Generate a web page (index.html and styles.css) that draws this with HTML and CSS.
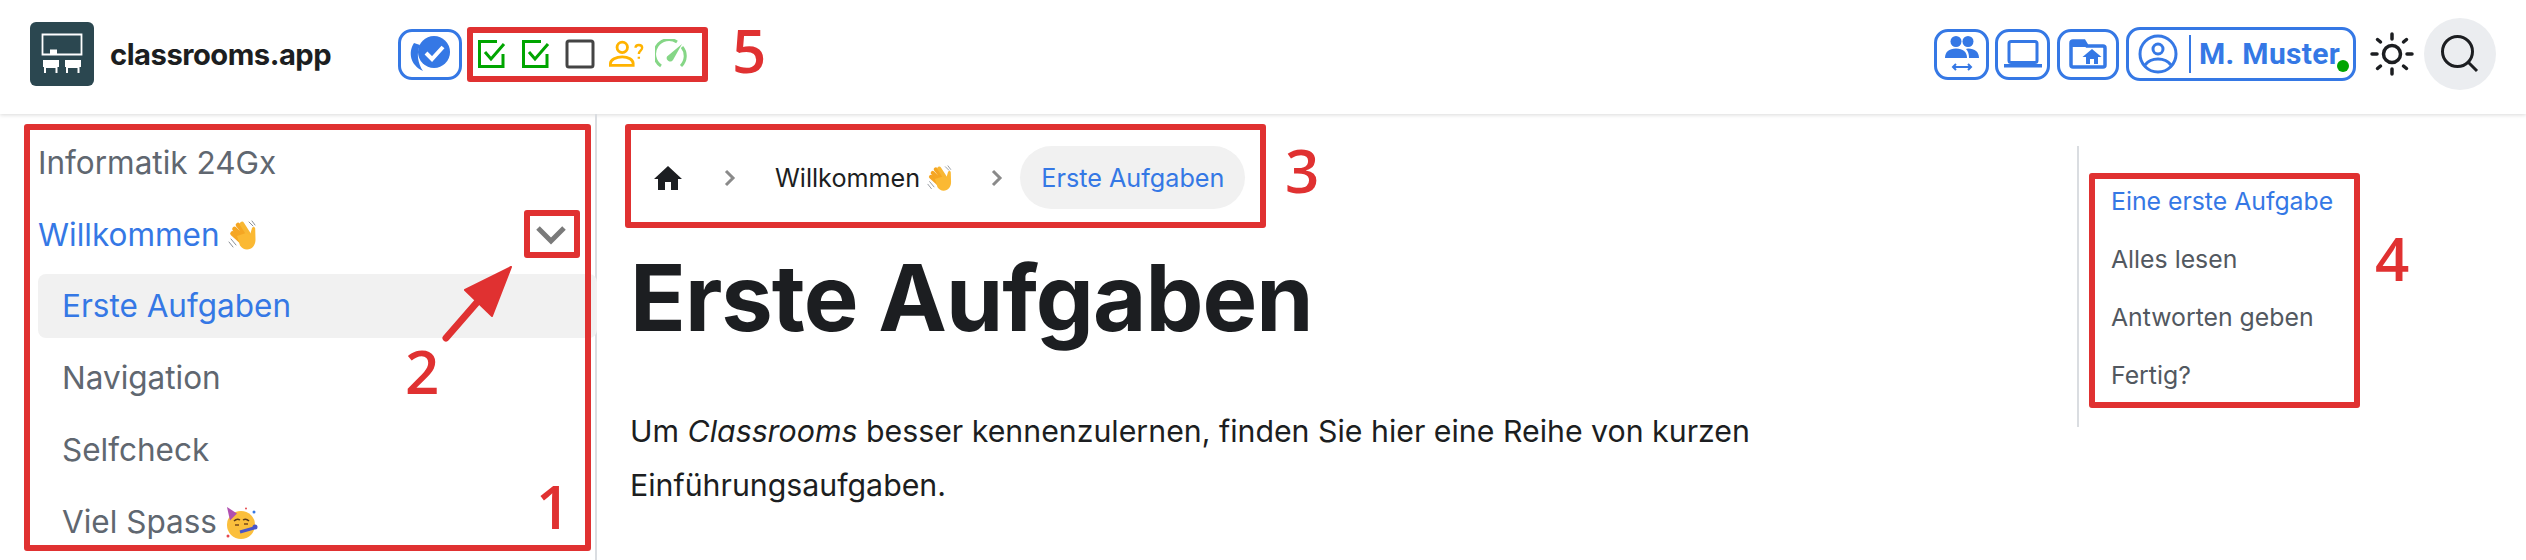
FILE: index.html
```html
<!DOCTYPE html>
<html lang="de">
  <head>
    <meta charset="UTF-8" />
    <meta name="viewport" content="width=device-width, initial-scale=1.0" />
    <title>Erste Aufgaben | classrooms.app</title>
    <link rel="stylesheet" href="styles.css">
  </head>
  <body>
    <svg class="defs" width="0" height="0">
      <symbol id="wave" viewBox="0 0 32 32">
        <g fill="none" stroke-linecap="round">
          <path d="M3 19l5 6M1 22l4 5" stroke="#8a8f96" stroke-width="1"/>
          <path d="M21 2l4 4M24 1l3 4" stroke="#8a8f96" stroke-width="1"/>
          <path d="M10 5l9 11M6.500 9l10 10M4.500 13.500l10 9" stroke="#f5a623" stroke-width="4.600"/>
          <path d="M14 4l7 11" stroke="#f8b733" stroke-width="4.600"/>
        </g>
        <path d="M9 16l9-3 4 2 2-7c.5-1.500 3-1.500 3.200.5l.3 11c0 6-3.500 10-8.500 10-3 0-5-1.500-7-4z" fill="#fbb933"/>
      </symbol>
    </svg>

    <nav class="navbar">
      <a class="brand">
        <svg class="logo" viewBox="0 0 64 64">
          <rect width="64" height="64" rx="6" fill="#2b4750"/>
          <path d="M12.500 12.500h39v20h-39z" fill="none" stroke="#fff" stroke-width="1.800"/>
          <rect x="20" y="27.500" width="7" height="5" fill="#fff"/>
          <path d="M13 38h16v7h-1.500v6h-2v-5h-9.500v5h-2v-6H13zM35 38h16v7h-1.500v6h-2v-5h-9.500v5h-2v-6H35z" fill="#fff"/>
        </svg>
        <span class="brand-name">classrooms.app</span>
      </a>

      <div class="outline-btn check-btn">
        <svg viewBox="0 0 50 40" width="50" height="40">
          <path d="M9 9c-6 9-4 22 9 28-5-7-7-18-3-26z" fill="#3578e5"/>
          <circle cx="29" cy="18" r="16" fill="#3578e5"/>
          <path d="M21 19l6 6 11-12" fill="none" stroke="#fff" stroke-width="4"/>
        </svg>
      </div>

      <div class="status-icons">
        <svg viewBox="0 0 30 30" width="30" height="30">
          <path d="M26 15v12.500H2.500V2.500H20M8 13l6 7L27 5" fill="none" stroke="#00a500" stroke-width="3"/>
        </svg>
        <svg viewBox="0 0 30 30" width="30" height="30">
          <path d="M26 15v12.500H2.500V2.500H20M8 13l6 7L27 5" fill="none" stroke="#00a500" stroke-width="3"/>
        </svg>
        <svg viewBox="0 0 30 30" width="30" height="30">
          <rect x="2" y="2" width="26" height="26" rx="2" fill="none" stroke="#444" stroke-width="3"/>
        </svg>
        <svg viewBox="0 0 38 30" width="36" height="30">
          <circle cx="14" cy="8" r="5.500" fill="none" stroke="#ffb300" stroke-width="3"/>
          <path d="M1.500 27v-2c0-4 6-7 12.500-7s11.500 3 11.500 7v2z" fill="none" stroke="#ffb300" stroke-width="3"/>
          <path d="M28 8.500c0-4 7-4 7 0 0 3-3.500 3-3.500 6.500M31.500 18v2" fill="none" stroke="#ffb300" stroke-width="2.500"/>
        </svg>
        <svg class="gauge" viewBox="0 0 32 30" width="32" height="30">
          <path d="M6 27A14 14 0 0 1 22 3M27 8a14 14 0 0 1-1 19" fill="none" stroke="#85d686" stroke-width="3"/>
          <path d="M27 5L18 21a3.500 3.500 0 0 1-6-3.500z" fill="#85d686"/>
        </svg>
      </div>

      <div class="navbar-right">
        <div class="outline-btn icon-btn people-btn">
          <svg viewBox="0 0 34 36" width="34" height="36">
            <circle cx="11" cy="5.500" r="5.500" fill="#3578e5"/>
            <circle cx="23" cy="5.500" r="5.500" fill="#3578e5"/>
            <path d="M0 22c0-6 4-9.500 11-9.500S22 16 22 22z" fill="#3578e5"/>
            <path d="M23 12.500c7 0 11 3.500 11 9.500H24c0-4-1-7-3-9z" fill="#3578e5"/>
            <path d="M8 31h18M11 28l-3 3 3 3M23 28l3 3-3 3" fill="none" stroke="#3578e5" stroke-width="2"/>
          </svg>
        </div>
        <div class="outline-btn icon-btn">
          <svg viewBox="0 0 38 28" width="38" height="28">
            <rect x="5" y="1.500" width="28" height="21" rx="2" fill="none" stroke="#3578e5" stroke-width="3"/>
            <path d="M0 24h38v3.500H0z" fill="#3578e5"/>
          </svg>
        </div>
        <div class="outline-btn icon-btn folder-btn">
          <svg viewBox="0 0 38 30" width="38" height="30">
            <path d="M2 4v22a2 2 0 0 0 2 2h30a2 2 0 0 0 2-2V9a2 2 0 0 0-2-2H18l-3-5H4a2 2 0 0 0-2 2z" fill="none" stroke="#3578e5" stroke-width="3.500"/>
            <path d="M2 3h14l3 5H2z" fill="#3578e5"/>
            <path d="M23 10l-9.500 8H17v7h4v-5h4v5h4v-7h3.500z" fill="#3578e5"/>
          </svg>
        </div>
        <div class="outline-btn user-btn">
          <svg viewBox="0 0 40 40" width="40" height="40">
            <circle cx="20" cy="20" r="18" fill="none" stroke="#3578e5" stroke-width="3"/>
            <circle cx="20" cy="15" r="5" fill="none" stroke="#3578e5" stroke-width="3"/>
            <path d="M7 31c3-4 8-6 13-6s10 2 13 6" fill="none" stroke="#3578e5" stroke-width="3"/>
          </svg>
          <span class="user-name">M. Muster</span>
          <span class="online-dot"></span>
        </div>
        <svg class="sun" viewBox="0 0 44 44" width="44" height="44">
          <circle cx="22" cy="22" r="8.500" fill="none" stroke="#1c1e21" stroke-width="3.500"/>
          <path d="M22 2v5M22 37v5M2 22h5M37 22h5M7.500 7.500l3 2.500M33.500 34l3 2.500M7.500 36.500l3-2.500M33.500 10l3-2.500" fill="none" stroke="#1c1e21" stroke-width="3.500" stroke-linecap="round"/>
        </svg>
        <div class="search-btn">
          <svg viewBox="0 0 40 40" width="40" height="40">
            <circle cx="17.500" cy="17.500" r="15" fill="none" stroke="#1c1e21" stroke-width="3"/>
            <path d="M28 28l9 9" fill="none" stroke="#1c1e21" stroke-width="3"/>
          </svg>
        </div>
      </div>
    </nav>

    <div class="layout">
      <aside class="sidebar">
        <a class="menu-link">Informatik 24Gx</a>
        <div class="menu-row">
          <a class="menu-link active">Willkommen <svg class="emoji"><use href="#wave"/></svg></a>
          <svg class="caret" viewBox="0 0 32 20" width="32" height="20">
            <path d="M3 3l13 13L29 3" fill="none" stroke="#7a7a7a" stroke-width="5"/>
          </svg>
        </div>
        <ul class="submenu">
          <li class="current">Erste Aufgaben</li>
          <li>Navigation</li>
          <li>Selfcheck</li>
          <li>Viel Spass
            <svg class="emoji party" viewBox="0 0 32 32">
              <circle cx="15" cy="18" r="14" fill="#fbbf3c"/>
              <path d="M1 0l10 6.500-7 7z" fill="#b04fb0"/>
              <path d="M8 14q3-3 6-1M17 13q3-2 6 1" fill="none" stroke="#5b3a1a" stroke-width="1.500"/>
              <path d="M9 18h4M18 17h4" stroke="#7a4a1a" stroke-width="1.500"/>
              <path d="M14 25l14-4" stroke="#4a55c8" stroke-width="3"/>
              <circle cx="29" cy="20" r="2.500" fill="#4a55c8"/>
              <circle cx="2" cy="29" r="1.500" fill="#e5484d"/>
              <circle cx="28" cy="5" r="1.500" fill="#3578e5"/>
              <circle cx="20" cy="1.500" r="1" fill="#e5484d"/>
            </svg>
          </li>
        </ul>
      </aside>

      <main class="content">
        <div class="breadcrumbs">
          <svg class="home" viewBox="0 0 28 24" width="28" height="24">
            <path d="M14 0L0 13h4v11h7v-8h6v8h7V13h4z" fill="#1c1e21"/>
          </svg>
          <svg class="crumb-sep first" viewBox="0 0 12 18" width="12" height="18">
            <path d="M2 2l7 7-7 7" fill="none" stroke="#8a8a8a" stroke-width="3"/>
          </svg>
          <span class="crumb">Willkommen <svg class="emoji small"><use href="#wave"/></svg></span>
          <svg class="crumb-sep" viewBox="0 0 12 18" width="12" height="18">
            <path d="M2 2l7 7-7 7" fill="none" stroke="#8a8a8a" stroke-width="3"/>
          </svg>
          <span class="crumb current">Erste Aufgaben</span>
        </div>
        <h1>Erste Aufgaben</h1>
        <p>Um <em>Classrooms</em> besser kennenzulernen, finden Sie hier eine Reihe von kurzen Einführungsaufgaben.</p>
      </main>

      <aside class="toc">
        <a class="active">Eine erste Aufgabe</a>
        <a>Alles lesen</a>
        <a>Antworten geben</a>
        <a>Fertig?</a>
      </aside>
    </div>

    <!-- red markup on top of the screenshot -->
    <div class="mark box-1"></div>
    <div class="mark box-2"></div>
    <div class="mark box-3"></div>
    <div class="mark box-4"></div>
    <div class="mark box-5"></div>
    <svg class="mark-arrow" viewBox="0 0 80 80" width="80" height="80">
      <path d="M8 76L48 30" stroke="#e03131" stroke-width="7" stroke-linecap="round"/>
      <path d="M73 5L27 28 54 54z" fill="#e03131" stroke="#e03131" stroke-width="2" stroke-linejoin="round"/>
    </svg>
    <span class="mark-num num-1">1</span>
    <span class="mark-num num-2">2</span>
    <span class="mark-num num-3">3</span>
    <span class="mark-num num-4">4</span>
    <span class="mark-num num-5">5</span>
  </body>
</html>
```

FILE: styles.css
```css
* {
  box-sizing: border-box;
}
html,
body {
  height: 100%;
}
body {
  margin: 0;
  overflow: hidden;
  position: relative;
  background: #fff;
  color: #1c1e21;
  font-family: Inter, "Liberation Sans", sans-serif;
}
.defs {
  position: absolute;
}
.navbar {
  display: flex;
  align-items: center;
  height: 114px;
  padding: 0 30px 6px;
  box-shadow: 0 1px 4px rgba(0, 0, 0, 0.15);
}
.brand {
  display: flex;
  align-items: center;
  gap: 16px;
  margin-right: 67px;
}
.logo {
  width: 64px;
  height: 64px;
  display: block;
}
.brand-name {
  font-size: 29.200px;
  font-weight: 700;
  letter-spacing: -0.5px;
}
.outline-btn {
  display: flex;
  align-items: center;
  justify-content: center;
  border: 3px solid #3578e5;
  border-radius: 14px;
  background: #fff;
}
.check-btn {
  width: 64px;
  height: 51px;
}
.status-icons {
  display: flex;
  align-items: center;
  gap: 14px;
  margin-left: 15px;
}
.gauge {
  margin-left: -4px;
}
.navbar-right {
  display: flex;
  align-items: center;
  margin-left: auto;
  gap: 7px;
}
.icon-btn {
  width: 55px;
  height: 51px;
}
.people-btn {
  margin-right: -1px;
}
.folder-btn {
  width: 62px;
}
.user-btn {
  position: relative;
  width: 230px;
  height: 54px;
  justify-content: flex-start;
  padding-left: 9px;
}
.user-name {
  margin-left: 11px;
  padding-left: 8px;
  border-left: 2px solid #3578e5;
  font-family: Roboto, sans-serif;
  font-size: 30px;
  font-weight: 700;
  line-height: 38px;
  color: #3578e5;
  letter-spacing: 0.3px;
}
.online-dot {
  position: absolute;
  right: 4px;
  bottom: 6px;
  width: 12px;
  height: 12px;
  border-radius: 50%;
  background: #00a500;
}
.sun {
  margin-left: 7px;
  margin-right: 3px;
}
.search-btn {
  display: flex;
  align-items: center;
  justify-content: center;
  width: 72px;
  height: 72px;
  border-radius: 50%;
  background: #ebedf0;
}
.layout {
  display: flex;
  height: 446px;
}
.sidebar {
  width: 597px;
  flex-shrink: 0;
  padding: 19px 0 0 38px;
  border-right: 2px solid #dadde1;
  font-size: 31.500px;
  color: #606770;
}
.menu-link {
  display: block;
  line-height: 60px;
}
.menu-row {
  display: flex;
  align-items: center;
  justify-content: space-between;
  padding-right: 28px;
  margin-top: 12px;
}
.active {
  color: #3578e5;
}
.emoji {
  width: 32px;
  height: 32px;
  vertical-align: -6px;
}
.submenu {
  list-style: none;
  margin: 9px -2px 0 0;
  padding: 0;
}
.submenu li {
  height: 64px;
  line-height: 64px;
  padding-left: 24px;
  margin-bottom: 8px;
  border-radius: 8px;
}
.submenu .current {
  background: #f1f1f1;
  color: #3578e5;
}
.content {
  flex: 1;
  padding: 32px 0 0 36px;
}
.breadcrumbs {
  display: flex;
  align-items: center;
  height: 63px;
  font-size: 25.200px;
}
.home {
  margin-left: 21px;
}
.crumb-sep {
  margin-left: 36px;
}
.crumb-sep.first {
  margin-left: 42px;
  margin-right: 39px;
}
.crumb {
  white-space: nowrap;
}
.crumb.current {
  display: flex;
  align-items: center;
  height: 63px;
  margin-left: 17px;
  padding: 0 21px;
  border-radius: 32px;
  background: #f1f1f1;
  color: #3578e5;
}
.emoji.small {
  width: 28px;
  height: 28px;
}
h1 {
  margin: 34px 0 0 -3px;
  font-size: 92px;
  font-weight: 700;
  line-height: 110px;
  letter-spacing: -1px;
}
p {
  width: 1170px;
  margin: 51px 0 0 -3px;
  font-size: 30.300px;
  line-height: 54px;
}
.toc {
  display: flex;
  flex-direction: column;
  width: 449px;
  height: 281px;
  margin-top: 32px;
  padding: 26px 0 0 32px;
  border-left: 2px solid #dadde1;
  font-size: 24.800px;
  color: #525860;
}
.toc a {
  line-height: 58px;
  height: 58px;
}
.toc .active {
  color: #3578e5;
}
.mark {
  position: absolute;
  border: 6px solid #e03131;
  border-radius: 3px;
}
.box-1 {
  left: 24px;
  top: 124px;
  width: 567px;
  height: 427px;
}
.box-2 {
  left: 524px;
  top: 210px;
  width: 56px;
  height: 48px;
}
.box-3 {
  left: 625px;
  top: 124px;
  width: 641px;
  height: 104px;
}
.box-4 {
  left: 2089px;
  top: 173px;
  width: 271px;
  height: 235px;
}
.box-5 {
  left: 467px;
  top: 27px;
  width: 241px;
  height: 55px;
}
.mark-arrow {
  position: absolute;
  left: 438px;
  top: 262px;
}
.mark-num {
  position: absolute;
  font-family: "Open Sans", sans-serif;
  font-size: 60px;
  font-weight: 600;
  line-height: 1;
  color: #e03131;
}
.num-1 {
  left: 536px;
  top: 476px;
}
.num-2 {
  left: 405px;
  top: 341px;
}
.num-3 {
  left: 1285px;
  top: 140px;
}
.num-4 {
  left: 2375px;
  top: 228px;
}
.num-5 {
  left: 732px;
  top: 20px;
}
```
